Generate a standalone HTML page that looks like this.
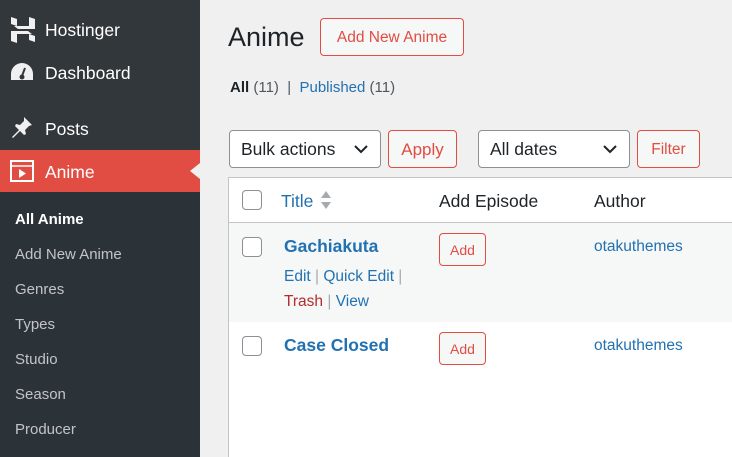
<!DOCTYPE html>
<html><head><style>
*{margin:0;padding:0;box-sizing:border-box}
html,body{width:732px;height:457px;overflow:hidden}
body{background:#f0f0f1;font-family:"Liberation Sans",sans-serif;position:relative;color:#1d2327}
.sb{position:absolute;left:0;top:0;width:200px;height:457px;background:#32373c}
.it{position:absolute;left:45px;color:#fff;font-size:17.5px}
.ic{position:absolute;left:10px}
.act{position:absolute;top:150px;left:0;width:200px;height:42px;background:#e14d43}
.sub{position:absolute;top:192px;left:0;width:200px;height:265px;background:#2c3338}
.sub div{position:absolute;left:15px;font-size:15px;color:#c3c4c7}
.ab{position:absolute}
.btn{position:absolute;border:1px solid #e14d43;color:#e14d43;border-radius:4px;background:#f6f7f7;font-size:15.5px;text-align:center}
.sel{position:absolute;border:1px solid #8c8f94;border-radius:4px;background:#fff;font-size:17.5px;padding-left:11px}
.sel svg{position:absolute;right:12px;top:14px}
.cb{position:absolute;width:20px;height:20px;border:1px solid #8c8f94;border-radius:4px;background:#fff}
a{color:#2271b1;text-decoration:none}
</style></head><body>
<div class="sb">
 <svg class="ic" style="top:16px" width="26" height="28" viewBox="0 0 26 28"><path d="M1 1l6 2v7l-6-2z M19 1l6 2v10H8l-4-3h15z M1 15h17l4 3H7v9l-6-2z M19 18l6 2v6l-6-2z" fill="#f0f0f1"/></svg>
 <div class="it" style="top:20px">Hostinger</div>
 <svg class="ic" style="top:62px" width="24" height="20" viewBox="0 0 24 20"><path d="M12 1A11 11 0 0 0 1 12v6h22v-6A11 11 0 0 0 12 1z" fill="#f0f0f1"/><path d="M12 14l3-8" stroke="#32373c" stroke-width="2"/><circle cx="12" cy="15" r="2.5" fill="#32373c"/></svg>
 <div class="it" style="top:63px">Dashboard</div>
 <svg class="ic" style="top:115px" width="24" height="24" viewBox="0 0 24 24"><path d="M14 2l8 8-3 1-4 4 1 4-2 1-4-4-7 7-1-1 7-7-4-4 1-2 4 1 4-4z" fill="#f0f0f1"/></svg>
 <div class="it" style="top:119px">Posts</div>
 <div class="act"></div>
 <svg class="ic" style="top:159px" width="24" height="24" viewBox="0 0 24 24"><rect x="1" y="2" width="22" height="20" fill="none" stroke="#fff" stroke-width="2"/><path d="M1 7h22" stroke="#fff" stroke-width="1.5"/><path d="M9 10v9l7-4.5z" fill="#fff"/></svg>
 <div class="it" style="top:162px">Anime</div>
 <div style="position:absolute;left:190px;top:163px;border-right:10px solid #f0f0f1;border-top:8px solid transparent;border-bottom:8px solid transparent"></div>
 <div class="sub">
  <div style="top:19px;color:#fff;font-weight:bold">All Anime</div>
  <div style="top:54px">Add New Anime</div>
  <div style="top:89px">Genres</div>
  <div style="top:124px">Types</div>
  <div style="top:159px">Studio</div>
  <div style="top:194px">Season</div>
  <div style="top:229px">Producer</div>
 </div>
</div>
<div class="ab" style="left:228px;top:22px;font-size:27px">Anime</div>
<div class="btn" style="left:320px;top:18px;width:144px;height:38px;line-height:37px">Add New Anime</div>
<div class="ab" style="left:230px;top:79px;font-size:15px;color:#50575e"><b style="color:#1d2327">All</b> (11) &nbsp;|&nbsp; <a>Published</a> (11)</div>
<div class="sel" style="left:229px;top:130px;width:152px;height:38px;line-height:37px">Bulk actions<svg width="14" height="9"><path d="M1 1l6 6 6-6" stroke="#1d2327" stroke-width="2" fill="none"/></svg></div>
<div class="btn" style="left:388px;top:130px;width:69px;height:38px;line-height:37px;font-size:17px">Apply</div>
<div class="sel" style="left:478px;top:130px;width:152px;height:38px;line-height:37px">All dates<svg width="14" height="9"><path d="M1 1l6 6 6-6" stroke="#1d2327" stroke-width="2" fill="none"/></svg></div>
<div class="btn" style="left:637px;top:130px;width:63px;height:38px;line-height:38px">Filter</div>
<div class="ab" style="left:228px;top:177px;width:510px;height:290px;background:#fff;border:1px solid #c3c4c7"></div>
<div class="ab" style="left:229px;top:222px;width:510px;height:1px;background:#c3c4c7"></div>
<div class="ab" style="left:229px;top:223px;width:510px;height:99px;background:#f6f7f7"></div>
<div class="cb" style="left:242px;top:190px"></div>
<div class="ab" style="left:281px;top:191px;font-size:17.5px;color:#2271b1">Title</div>
<svg class="ab" style="left:320px;top:190px" width="12" height="20"><path d="M1 8l5-7 5 7z M1 12l5 7 5-7z" fill="#a7aaad"/></svg>
<div class="ab" style="left:439px;top:191px;font-size:17.5px">Add Episode</div>
<div class="ab" style="left:594px;top:191px;font-size:17.5px">Author</div>
<div class="cb" style="left:242px;top:237px"></div>
<div class="ab" style="left:284px;top:236px;font-size:17.5px;font-weight:bold;color:#2271b1">Gachiakuta</div>
<div class="ab" style="left:284px;top:268px;font-size:15.5px;color:#a7aaad"><a>Edit</a> | <a>Quick Edit</a> |</div>
<div class="ab" style="left:284px;top:293px;font-size:15.5px;color:#a7aaad"><a style="color:#b32d2e">Trash</a> | <a>View</a></div>
<div class="btn" style="left:439px;top:233px;width:47px;height:33px;line-height:32px;font-size:14px">Add</div>
<div class="ab" style="left:594px;top:238px;font-size:15.5px;color:#2271b1">otakuthemes</div>
<div class="cb" style="left:242px;top:336px"></div>
<div class="ab" style="left:284px;top:335px;font-size:17.5px;font-weight:bold;color:#2271b1">Case Closed</div>
<div class="btn" style="left:439px;top:332px;width:47px;height:33px;line-height:32px;font-size:14px">Add</div>
<div class="ab" style="left:594px;top:337px;font-size:15.5px;color:#2271b1">otakuthemes</div>
</body></html>
